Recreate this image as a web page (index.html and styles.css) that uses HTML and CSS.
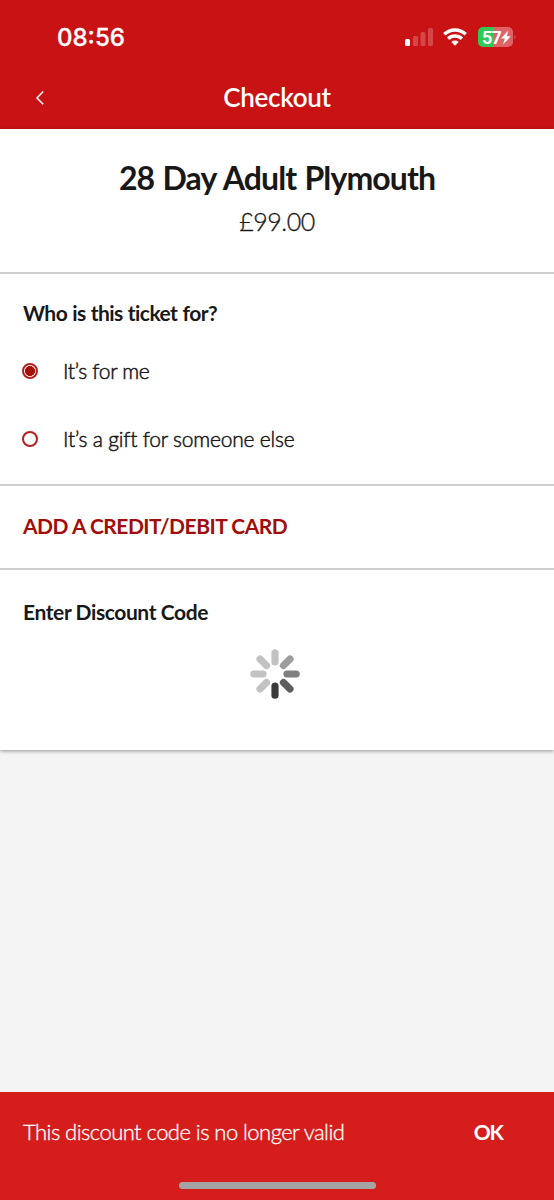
FILE: index.html
```html
<!DOCTYPE html>
<html lang="en">
<head>
<meta charset="utf-8">
<title>Checkout</title>
<link rel="stylesheet" href="styles.css">
</head>
<body>
<div class="screen">
  <header class="header">
    <div class="status">
      <span class="time">08:56</span>
      <svg class="status-icons" width="112" height="24" viewBox="0 0 112 24">
        <g fill="#fff">
          <rect x="1" y="14" width="5" height="7" rx="1.5"/>
          <g opacity=".22"><rect x="9" y="11" width="5" height="10" rx="1.5"/><rect x="16.5" y="7" width="5" height="14" rx="1.5"/><rect x="24" y="3" width="5" height="18" rx="1.5"/></g>
        </g>
        <g fill="none" stroke="#fff" stroke-width="3.400"><path d="M40.300 9.300a15.500 15.500 0 0 1 21.400 0M44.100 13.700a10 10 0 0 1 13.800 0"/></g>
        <path d="M47.300 17a5.400 5.400 0 0 1 7.400 0L51 20.800z" fill="#fff"/>
        <path d="M79 2h15v20H79a5 5 0 0 1-5-5V7a5 5 0 0 1 5-5z" fill="#30c955"/>
        <path d="M94 2h14a5 5 0 0 1 5 5v10a5 5 0 0 1-5 5H94z" transform="translate(-4)" fill="#df6267"/>
        <path d="M110.500 9.500q2 2.500 0 5z" fill="#df6267"/>
        <text class="charge" x="78" y="18.500">57</text>
        <path d="M104.200 5.500l-7.200 8h3.800l-1.800 6 7.800-8.200h-3.800z" fill="#fff"/>
      </svg>
    </div>
    <div class="nav">
      <svg class="back" width="12" height="16" viewBox="0 0 12 16"><path d="M9.200 1.500L3 8l6.200 6.200" fill="none" stroke="#fff" stroke-width="1.500"/></svg>
      <h1 class="nav-title">Checkout</h1>
    </div>
  </header>
  <main class="card">
    <section class="product">
      <h2 class="product-name">28 Day Adult Plymouth</h2>
      <p class="price">£99.00</p>
    </section>
    <section class="recipient">
      <h3 class="label who">Who is this ticket for?</h3>
      <div class="option"><span class="radio checked"></span><span class="me">It’s for me</span></div>
      <div class="option"><span class="radio"></span><span class="gift">It’s a gift for someone else</span></div>
    </section>
    <section class="payment"><span class="add-card">ADD A CREDIT/DEBIT CARD</span></section>
    <section class="discount">
      <h3 class="label enter">Enter Discount Code</h3>
      <svg class="spinner" width="50" height="50" viewBox="-25 -25 50 50" stroke-width="7.200" stroke-linecap="round">
        <path d="M0-12v-9.200" stroke="#c2c2c2"/>
        <path d="M0-12v-9.200" stroke="#9d9d9d" transform="rotate(45)"/>
        <path d="M0-12v-9.200" stroke="#7f7f7f" transform="rotate(90)"/>
        <path d="M0-12v-9.200" stroke="#5e5e5e" transform="rotate(135)"/>
        <path d="M0-12v-9.200" stroke="#3b3b3b" transform="rotate(180)"/>
        <path d="M0-12v-9.200" stroke="#c2c2c2" transform="rotate(225)"/>
        <path d="M0-12v-9.200" stroke="#c2c2c2" transform="rotate(270)"/>
        <path d="M0-12v-9.200" stroke="#c2c2c2" transform="rotate(315)"/>
      </svg>
    </section>
  </main>
  <footer class="snackbar">
    <div class="message-row"><span class="message">This discount code is no longer valid</span><span class="ok">OK</span></div>
    <div class="home-indicator"></div>
  </footer>
</div>
</body>
</html>
```
FILE: styles.css
```css
* { box-sizing: border-box; margin: 0; padding: 0; }
body { font-family: Lato, "Liberation Sans", sans-serif; color: #181818; background: #f4f4f4; font-variant-ligatures: none; }
.screen { height: 1200px; display: flex; flex-direction: column; white-space: nowrap; }
.header { height: 129px; background: #c91214; color: #fff; }
.status { height: 74px; padding: 0 38px 0 57px; display: flex; align-items: center; justify-content: space-between; }
.time { font: 500 24px/28px Inter, sans-serif; padding-top: 2px; -webkit-text-stroke: 0.3px; }
.charge { font: 700 18px Roboto, sans-serif; fill: #fff; letter-spacing: -0.9px; }
.nav { height: 46px; padding: 0 34px; display: grid; grid-template-columns: 12px 1fr 12px; align-items: center; }
.back { margin-top: 2px; }
.nav-title { font-size: 26px; line-height: 32px; font-weight: 600; text-align: center; letter-spacing: -0.3px; }
.card { height: 621px; background: #fff; box-shadow: 0 1px 4px rgba(0, 0, 0, .4); }
.product { height: 145px; padding-top: 29px; text-align: center; border-bottom: 2px solid #cecece; }
.product-name { font-size: 32px; line-height: 40px; font-weight: 700; letter-spacing: -0.9px; word-spacing: 1.4px; }
.price { font-size: 25px; line-height: 30px; font-weight: 300; margin-top: 8px; letter-spacing: -0.5px; -webkit-text-stroke: 0.3px; }
.recipient { height: 212px; padding: 25px 23px 0; border-bottom: 2px solid #cecece; }
.label { font-size: 21px; line-height: 28px; font-weight: 700; }
.who { margin-bottom: 10px; letter-spacing: -0.55px; word-spacing: 0.5px; }
.enter { letter-spacing: -0.4px; }
.option { height: 68px; display: flex; align-items: center; gap: 25px; font-size: 21px; line-height: 26px; font-weight: 300; -webkit-text-stroke: 0.5px; }
.me { letter-spacing: -0.3px; margin-top: -1px; }
.gift { letter-spacing: -0.2px; margin-top: -1px; }
.radio { width: 16px; height: 16px; margin-left: -1px; border: 2px solid #b3211e; border-radius: 50%; }
.checked { background: radial-gradient(circle, #a90e0a 0 4.7px, #fff 5.3px); }
.payment { height: 84px; padding: 0 23px 2px; display: flex; align-items: center; border-bottom: 2px solid #cecece; color: #a10d0a; }
.add-card { font-size: 21px; line-height: 28px; font-weight: 700; letter-spacing: -0.5px; }
.discount { padding: 28px 23px 0; display: flex; flex-direction: column; }
.spinner { align-self: center; margin: 23px 0 0 -4px; }
.snackbar { margin-top: auto; height: 108px; background: #d51e1c; color: #fff; display: flex; flex-direction: column; align-items: center; }
.message-row { width: 100%; height: 80px; padding: 0 51px 0 23px; display: flex; align-items: center; justify-content: space-between; font-size: 22px; line-height: 28px; }
.message { font-weight: 300; letter-spacing: -0.55px; -webkit-text-stroke: 0.3px; }
.ok { font-weight: 700; letter-spacing: -1px; font-size: 21px; }
.home-indicator { width: 197px; height: 7px; margin-top: 10px; border-radius: 4px; background: #a4a4a4; }
```
